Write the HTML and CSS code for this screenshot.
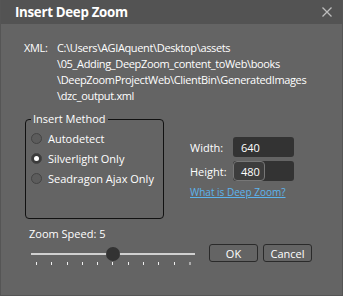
FILE: index.html
```html
<!DOCTYPE html>
<html lang="en">
<head>
    <meta charset="UTF-8" />
    <title>Insert Deep Zoom</title>
    <link rel="stylesheet" href="styles.css">
</head>
<body>
    <div class="dialog">
        <div class="titlebar">
            <span class="title">Insert Deep Zoom</span>
            <svg class="close" width="10" height="10" viewBox="0 0 10 10">
                <path d="M0.5 0.5L9.5 9.5M9.5 0.5L0.5 9.5" stroke="#bdbdbd" stroke-width="1.3" fill="none" />
            </svg>
        </div>
        <div class="content">
            <div class="xml">
                <span class="xml-label">XML:</span>
                <div class="xml-path">
                    <div>C:\Users\AGIAquent\Desktop\assets</div>
                    <div>\05_Adding_DeepZoom_content_toWeb\books</div>
                    <div>\DeepZoomProjectWeb\ClientBin\GeneratedImages</div>
                    <div>\dzc_output.xml</div>
                </div>
            </div>
            <div class="middle">
                <div class="method">
                    <span class="legend">Insert Method</span>
                    <div class="radio"><span class="dot"></span>Autodetect</div>
                    <div class="radio"><span class="dot checked"></span>Silverlight Only</div>
                    <div class="radio"><span class="dot"></span>Seadragon Ajax Only</div>
                </div>
                <div class="size">
                    <div class="field"><span class="field-label">Width:</span><span class="input">640</span></div>
                    <div class="field"><span class="field-label">Height:</span><span class="input"><span class="sel">480</span></span></div>
                    <a href="#" class="link">What is Deep Zoom?</a>
                </div>
            </div>
            <div class="speed-label">Zoom Speed: 5</div>
            <div class="bottom">
                <div class="slider">
                    <div class="track"><span class="thumb"></span></div>
                    <div class="ticks">
                        <i></i><i></i><i></i><i></i><i></i><i></i><i></i><i></i><i></i><i></i><i class="last"></i>
                    </div>
                </div>
                <div class="buttons">
                    <span class="btn">OK</span>
                    <span class="btn">Cancel</span>
                </div>
            </div>
        </div>
    </div>
</body>
</html>
```

FILE: styles.css
```css
* {
    margin: 0;
    padding: 0;
    box-sizing: border-box;
}
body {
    width: 343px;
    height: 296px;
    font-family: "Open Sans", "Liberation Sans", sans-serif;
    font-size: 11px;
    color: #fff;
    background-color: #4a4a4a;
}
.dialog {
    width: 343px;
    height: 296px;
    background-color: #646464;
    border: 1px solid #555;
    border-top: none;
    display: flex;
    flex-direction: column;
}
.titlebar {
    height: 24px;
    background-color: #535353;
    display: flex;
    align-items: center;
    justify-content: space-between;
    padding: 0 10px 0 14px;
}
.title {
    font-size: 13.3px;
    font-weight: bold;
    letter-spacing: -0.3px;
}
.content {
    padding: 16px 0 0 23px;
}
.xml {
    display: flex;
    line-height: 16px;
    letter-spacing: -0.35px;
}
.xml-label {
    width: 33px;
}
.middle {
    display: flex;
    margin-top: 15px;
}
.method {
    flex: none;
    width: 139px;
    height: 100px;
    border: 1px solid #111;
    border-radius: 4px;
    padding: 8px 0 0 5px;
    margin-left: 1px;
    position: relative;
}
.method .legend {
    position: absolute;
    left: 5px;
    top: -8px;
    padding: 0 2px;
    line-height: 14px;
    background-color: #646464;
}
.radio {
    display: flex;
    align-items: center;
    height: 20px;
}
.dot {
    width: 11px;
    height: 11px;
    border-radius: 50%;
    border: 1px solid #444;
    background-color: #5c5c5c;
    margin-right: 6px;
    position: relative;
}
.dot.checked {
    background-color: #3a3a3a;
}
.dot.checked::after {
    content: "";
    position: absolute;
    left: 2px;
    top: 2px;
    width: 5px;
    height: 5px;
    border-radius: 50%;
    background-color: #fff;
}
.size {
    margin-left: 26px;
    padding-top: 18px;
}
.field {
    display: flex;
    align-items: center;
    height: 20px;
    margin-bottom: 4px;
}
.field-label {
    width: 43px;
}
.input {
    width: 61px;
    height: 20px;
    background-color: #333;
    border-radius: 3px;
    padding-left: 8px;
    display: flex;
    align-items: center;
}
.input .sel {
    margin-left: -8px;
    height: 20px;
    padding: 0 4px 0 7px;
    border: 1px solid #777;
    border-radius: 4px;
    background-color: #3d3d3d;
    display: flex;
    align-items: center;
}
.link {
    display: block;
    color: #5db4ee;
    font-size: 10px;
    margin-top: 1px;
}
.speed-label {
    margin-top: 7px;
    margin-left: 5px;
}
.bottom {
    display: flex;
    margin-top: 5px;
}
.slider {
    width: 164px;
    margin-left: 7px;
}
.track {
    height: 2px;
    background-color: #d0d0d0;
    position: relative;
    margin-top: 7px;
}
.thumb {
    position: absolute;
    left: 75px;
    top: -6px;
    width: 14px;
    height: 14px;
    border-radius: 50%;
    background-color: #333;
}
.ticks {
    display: flex;
    justify-content: space-between;
    padding: 0 4px 0 5px;
    margin-top: 7px;
}
.ticks i {
    width: 1px;
    height: 3px;
    background-color: #eee;
}
.ticks i.last {
    width: 2px;
    background-color: #aaa;
}
.buttons {
    display: flex;
    gap: 5px;
    margin-left: 14px;
    margin-top: -2px;
}
.btn {
    width: 49px;
    height: 18px;
    border: 1px solid #2a2a2a;
    border-radius: 3px;
    display: flex;
    align-items: center;
    justify-content: center;
}
```
